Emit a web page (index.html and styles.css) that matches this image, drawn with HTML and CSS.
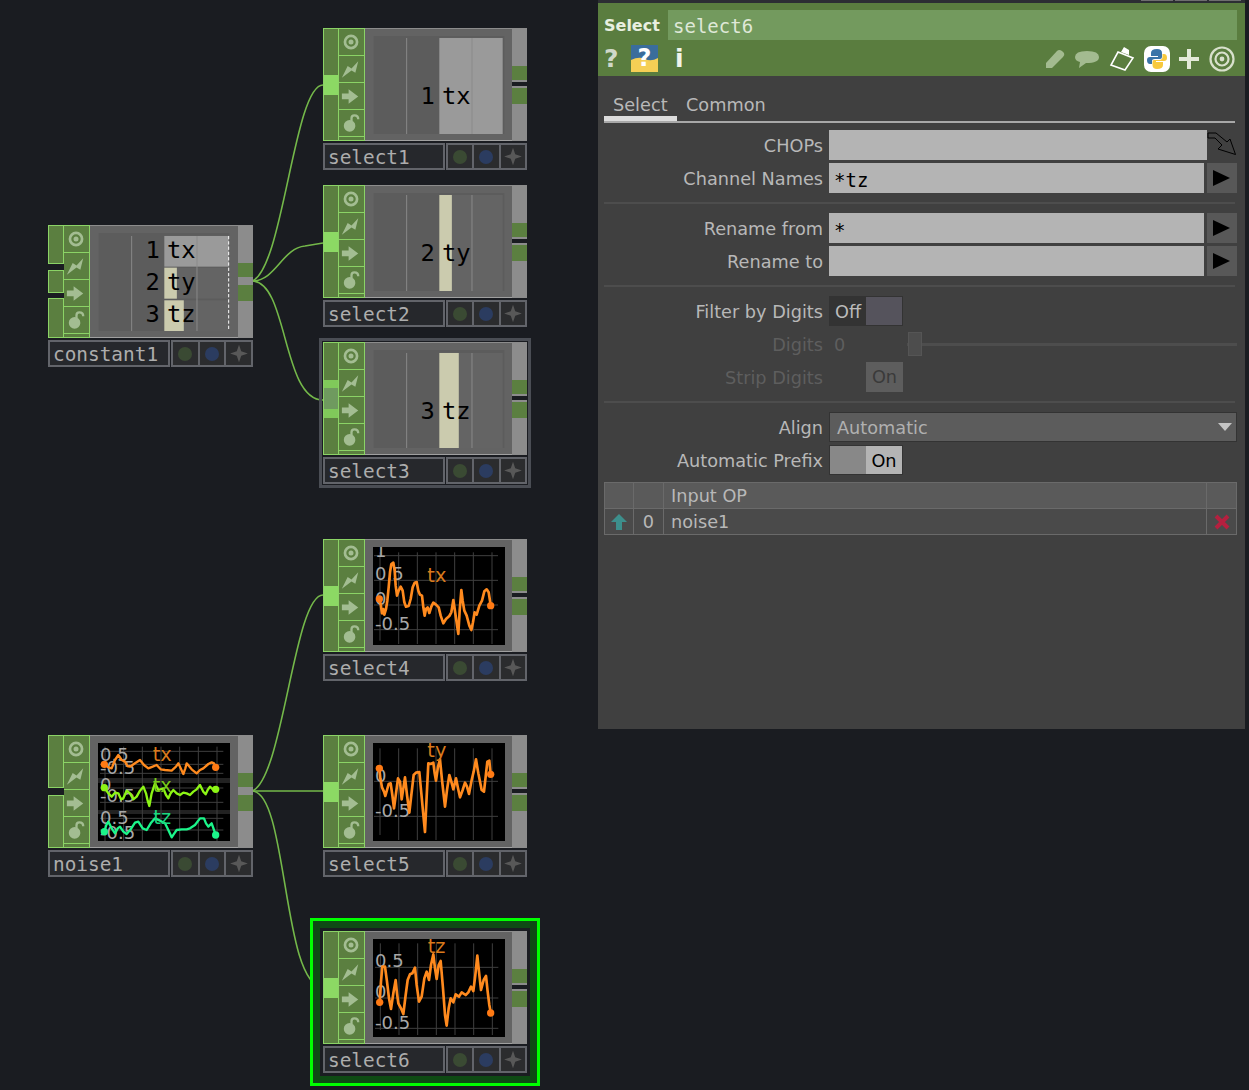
FILE: index.html

```html
<!DOCTYPE html>
<html lang="en">

<head>
    <meta charset="UTF-8">
    <title>select6</title>
    <link rel="stylesheet" href="styles.css">
</head>

<body>
    <svg class="defs" width="0" height="0">
        <symbol id="i-target" viewBox="0 0 26 26">
            <circle cx="12.5" cy="13" r="6.3" fill="none" stroke="#a3bd92" stroke-width="2.8" />
            <circle cx="12.5" cy="13" r="2.6" fill="#a3bd92" />
        </symbol>
        <symbol id="i-bolt" viewBox="0 0 26 26">
            <path d="M3 22 L9 10 L13 12.5 L20 5 L17 17 L13 14.5 Z" fill="#a3bd92" />
        </symbol>
        <symbol id="i-arrow" viewBox="0 0 26 26">
            <path d="M3 10.5 H10 V6 L20 13.5 L10 21 V16.5 H3 Z" fill="#a3bd92" />
        </symbol>
        <symbol id="i-lock" viewBox="0 0 26 26">
            <circle cx="11" cy="16" r="6" fill="#a3bd92" />
            <path d="M13 11 V8 Q13 5 16 5 Q20 5 20 9" fill="none" stroke="#a3bd92" stroke-width="2.4" />
        </symbol>
        <symbol id="i-star" viewBox="0 0 26 26">
            <path d="M13 3 L15.5 10.5 L23 13 L15.5 15.5 L13 23 L10.5 15.5 L3 13 L10.5 10.5 Z" fill="#585858" />
        </symbol>
    </svg>

    <!-- wires between the nodes -->
    <svg class="wires" width="1249" height="1090" viewBox="0 0 1249 1090">
        <path d="M252 281 C283 270 294 85 323 85" />
        <path d="M252 281 C276 281 282 248 305 246 L323 243" />
        <path d="M252 281 C288 281 282 400 323 400" />
        <path d="M252 791 C283 780 294 595 323 595" />
        <path d="M252 791 H323" />
        <path d="M252 791 C288 791 282 987 323 987" />
    </svg>

    <!-- constant1 -->
    <div class="node n-constant1">
        <div class="node-body">
            <div class="inputs">
                <div class="input in-a"></div>
                <div class="input in-b"></div>
                <div class="input in-c"></div>
            </div>
            <div class="btns">
                <div class="btn"><svg><use href="#i-target" /></svg></div>
                <div class="btn"><svg><use href="#i-bolt" /></svg></div>
                <div class="btn"><svg><use href="#i-arrow" /></svg></div>
                <div class="btn"><svg><use href="#i-lock" /></svg></div>
                <div class="btn-end"></div>
            </div>
            <div class="view">
                <svg class="screen" viewBox="174 48 396 297">
                    <rect x="174" y="48" width="396" height="297" fill="#5c5c5c" />
                    <rect x="373" y="57" width="195" height="93" fill="#9a9a9a" />
                    <rect x="373" y="153" width="195" height="94" fill="#646464" />
                    <rect x="373" y="252" width="195" height="93" fill="#646464" />
                    <rect x="373" y="153" width="38" height="94" fill="#cbcbae" />
                    <rect x="373" y="252" width="59" height="93" fill="#cbcbae" />
                    <path class="tick" d="M274 57 V345 M472 57 V345" />
                    <path class="dash" d="M568 57 V345" />
                    <text class="num" x="316" y="124">1</text>
                    <text class="num" x="381" y="124">tx</text>
                    <text class="num" x="316" y="221">2</text>
                    <text class="num" x="381" y="221">ty</text>
                    <text class="num" x="316" y="318">3</text>
                    <text class="num" x="381" y="318">tz</text>
                </svg>
            </div>
            <div class="outs">
                <div class="out"></div>
                <div class="out-gap plain"></div>
                <div class="out"></div>
            </div>
        </div>
        <div class="node-foot">
            <div class="node-name">constant1</div>
            <div class="flags">
                <div class="flag"><i class="dot dot-green"></i></div>
                <div class="flag"><i class="dot dot-blue"></i></div>
                <div class="flag"><svg><use href="#i-star" /></svg></div>
            </div>
        </div>
    </div>

    <!-- select1 -->
    <div class="node n-select1">
        <div class="node-body">
            <div class="inputs">
                <div class="input"><span class="wire-in"></span></div>
            </div>
            <div class="btns">
                <div class="btn"><svg><use href="#i-target" /></svg></div>
                <div class="btn"><svg><use href="#i-bolt" /></svg></div>
                <div class="btn"><svg><use href="#i-arrow" /></svg></div>
                <div class="btn"><svg><use href="#i-lock" /></svg></div>
                <div class="btn-end"></div>
            </div>
            <div class="view">
                <svg class="screen" viewBox="174 45 396 297">
                    <rect x="174" y="45" width="396" height="297" fill="#5c5c5c" />
                    <rect x="373" y="51" width="192" height="291" fill="#9a9a9a" />
                    <path class="tick" d="M274 51 V342 M472 51 V342" />
                    <text class="num" x="316" y="252">1</text>
                    <text class="num" x="381" y="252">tx</text>
                </svg>
            </div>
            <div class="outs">
                <div class="out"></div>
                <div class="out-gap"></div>
                <div class="out"></div>
            </div>
        </div>
        <div class="node-foot">
            <div class="node-name">select1</div>
            <div class="flags">
                <div class="flag"><i class="dot dot-green"></i></div>
                <div class="flag"><i class="dot dot-blue"></i></div>
                <div class="flag"><svg><use href="#i-star" /></svg></div>
            </div>
        </div>
    </div>

    <!-- select2 -->
    <div class="node n-select2">
        <div class="node-body">
            <div class="inputs">
                <div class="input"><span class="wire-in"></span></div>
            </div>
            <div class="btns">
                <div class="btn"><svg><use href="#i-target" /></svg></div>
                <div class="btn"><svg><use href="#i-bolt" /></svg></div>
                <div class="btn"><svg><use href="#i-arrow" /></svg></div>
                <div class="btn"><svg><use href="#i-lock" /></svg></div>
                <div class="btn-end"></div>
            </div>
            <div class="view">
                <svg class="screen" viewBox="174 45 396 297">
                    <rect x="174" y="45" width="396" height="297" fill="#5c5c5c" />
                    <rect x="373" y="51" width="192" height="291" fill="#646464" />
                    <rect x="373" y="51" width="38" height="291" fill="#cbcbae" />
                    <path class="tick" d="M274 51 V342 M472 51 V342" />
                    <text class="num" x="316" y="252">2</text>
                    <text class="num" x="381" y="252">ty</text>
                </svg>
            </div>
            <div class="outs">
                <div class="out"></div>
                <div class="out-gap"></div>
                <div class="out"></div>
            </div>
        </div>
        <div class="node-foot">
            <div class="node-name">select2</div>
            <div class="flags">
                <div class="flag"><i class="dot dot-green"></i></div>
                <div class="flag"><i class="dot dot-blue"></i></div>
                <div class="flag"><svg><use href="#i-star" /></svg></div>
            </div>
        </div>
    </div>

    <!-- select3 -->
    <div class="node n-select3">
        <div class="node-body">
            <div class="inputs">
                <div class="input"><span class="wire-in wire-soft"></span></div>
            </div>
            <div class="btns">
                <div class="btn"><svg><use href="#i-target" /></svg></div>
                <div class="btn"><svg><use href="#i-bolt" /></svg></div>
                <div class="btn"><svg><use href="#i-arrow" /></svg></div>
                <div class="btn"><svg><use href="#i-lock" /></svg></div>
                <div class="btn-end"></div>
            </div>
            <div class="view">
                <svg class="screen" viewBox="174 42 396 297">
                    <rect x="174" y="42" width="396" height="297" fill="#5c5c5c" />
                    <rect x="373" y="51" width="192" height="288" fill="#646464" />
                    <rect x="373" y="51" width="59" height="288" fill="#cbcbae" />
                    <path class="tick" d="M274 51 V339 M472 51 V339" />
                    <text class="num" x="316" y="250">3</text>
                    <text class="num" x="381" y="250">tz</text>
                </svg>
            </div>
            <div class="outs">
                <div class="out"></div>
                <div class="out-gap"></div>
                <div class="out"></div>
            </div>
        </div>
        <div class="node-foot">
            <div class="node-name">select3</div>
            <div class="flags">
                <div class="flag"><i class="dot dot-green"></i></div>
                <div class="flag"><i class="dot dot-blue"></i></div>
                <div class="flag"><svg><use href="#i-star" /></svg></div>
            </div>
        </div>
    </div>

    <!-- select4 -->
    <div class="node n-select4">
        <div class="node-body">
            <div class="inputs">
                <div class="input"><span class="wire-in"></span></div>
            </div>
            <div class="btns">
                <div class="btn"><svg><use href="#i-target" /></svg></div>
                <div class="btn"><svg><use href="#i-bolt" /></svg></div>
                <div class="btn"><svg><use href="#i-arrow" /></svg></div>
                <div class="btn"><svg><use href="#i-lock" /></svg></div>
                <div class="btn-end"></div>
            </div>
            <div class="view">
                <svg class="screen" viewBox="9 9 396 294">
                    <rect x="9" y="9" width="396" height="294" fill="#000" />
                    <path class="grid" d="M30 25 V290 M86 25 V300 M142 25 V300 M198 25 V300 M254 25 V300 M310 25 V300 M366 25 V300 M12 35 H384 M12 109 H384 M12 183 H384 M12 257 H384" />
                    <text class="val" x="15" y="38">1</text>
                    <text class="val" x="15" y="108">0.5</text>
                    <text class="val" x="15" y="182">0</text>
                    <text class="val" x="15" y="258">-0.5</text>
                    <polyline class="trace" points="28,165 32,180 36,208 40,195 43,212 48,195 52,170 56,130 60,85 64,60 70,56 74,80 77,125 81,155 86,140 92,128 98,140 103,175 108,188 116,186 122,165 128,130 134,116 140,114 145,140 150,152 156,155 160,190 164,215 168,195 173,190 178,207 184,188 190,176 198,182 206,190 212,215 220,238 228,225 238,216 244,205 250,168 254,195 258,222 262,250 265,270 269,200 274,138 278,170 283,200 290,215 298,245 304,258 309,235 314,205 320,212 328,185 336,170 343,142 350,136 356,145 360,170 362,185" />
                    <circle class="end" cx="28" cy="165" r="11" />
                    <circle class="end" cx="362" cy="185" r="11" />
                    <text class="chan" x="172" y="114">tx</text>
                </svg>
            </div>
            <div class="outs">
                <div class="out"></div>
                <div class="out-gap"></div>
                <div class="out"></div>
            </div>
        </div>
        <div class="node-foot">
            <div class="node-name">select4</div>
            <div class="flags">
                <div class="flag"><i class="dot dot-green"></i></div>
                <div class="flag"><i class="dot dot-blue"></i></div>
                <div class="flag"><svg><use href="#i-star" /></svg></div>
            </div>
        </div>
    </div>

    <!-- noise1 -->
    <div class="node n-noise1">
        <div class="node-body">
            <div class="inputs">
                <div class="input in-half"></div>
                <div class="input in-half"></div>
            </div>
            <div class="btns">
                <div class="btn"><svg><use href="#i-target" /></svg></div>
                <div class="btn"><svg><use href="#i-bolt" /></svg></div>
                <div class="btn"><svg><use href="#i-arrow" /></svg></div>
                <div class="btn"><svg><use href="#i-lock" /></svg></div>
                <div class="btn-end"></div>
            </div>
            <div class="view">
                <svg class="screen" viewBox="174 39 396 294">
                    <rect x="174" y="39" width="396" height="294" fill="#000" />
                    <rect x="174" y="144" width="396" height="15" fill="#222" />
                    <rect x="174" y="240" width="396" height="12" fill="#222" />
                    <path class="grid" d="M195 50 V333 M251 50 V333 M307 50 V333 M363 50 V333 M419 50 V333 M475 50 V333 M531 50 V333 M180 64 H550 M180 103 H550 M180 130 H550 M180 174 H550 M180 217 H550 M180 265 H550 M180 300 H550" />
                    <text class="val" x="180" y="92">0.5</text>
                    <text class="val" x="180" y="132">-0.5</text>
                    <text class="val" x="180" y="182">0</text>
                    <text class="val" x="180" y="215">-0.5</text>
                    <text class="val" x="180" y="282">0.5</text>
                    <text class="val" x="180" y="326">-0.5</text>
                    <polyline class="trace thin" points="193,103 205,112 215,115 225,90 235,75 245,90 255,95 262,108 270,110 285,100 300,90 312,105 325,115 338,110 350,105 362,118 375,120 395,122 408,110 415,100 422,115 430,132 436,115 440,100 455,118 470,130 480,120 490,115 505,102 515,97 522,100 527,112" />
                    <polyline class="trace thin lime" points="193,173 205,190 215,200 225,188 235,190 243,208 250,205 260,182 270,190 280,208 290,200 300,182 310,170 318,190 323,212 328,228 335,190 345,160 355,180 370,175 378,195 385,205 392,190 400,180 410,190 420,195 430,188 440,190 450,195 460,185 470,178 480,165 490,185 497,193 503,180 510,170 520,180 527,178" />
                    <polyline class="trace thin mint" points="193,305 199,285 205,275 215,295 225,310 233,295 240,290 250,305 260,312 272,298 285,278 295,275 308,295 320,300 332,280 345,265 360,272 375,280 385,300 395,322 403,310 410,300 425,298 440,298 450,295 465,285 480,265 492,265 498,280 505,290 515,280 522,300 527,315" />
                    <circle class="end" cx="193" cy="103" r="11" />
                    <circle class="end" cx="527" cy="112" r="11" />
                    <circle class="end lime" cx="193" cy="173" r="11" />
                    <circle class="end lime" cx="527" cy="178" r="11" />
                    <circle class="end mint" cx="193" cy="305" r="11" />
                    <circle class="end mint" cx="527" cy="315" r="11" />
                    <text class="chan" x="338" y="94">tx</text>
                    <text class="chan lime" x="338" y="186">tx</text>
                    <text class="chan mint" x="340" y="282">tz</text>
                </svg>
            </div>
            <div class="outs">
                <div class="out"></div>
                <div class="out-gap plain"></div>
                <div class="out"></div>
            </div>
        </div>
        <div class="node-foot">
            <div class="node-name">noise1</div>
            <div class="flags">
                <div class="flag"><i class="dot dot-green"></i></div>
                <div class="flag"><i class="dot dot-blue"></i></div>
                <div class="flag"><svg><use href="#i-star" /></svg></div>
            </div>
        </div>
    </div>

    <!-- select5 -->
    <div class="node n-select5">
        <div class="node-body">
            <div class="inputs">
                <div class="input"><span class="wire-in"></span></div>
            </div>
            <div class="btns">
                <div class="btn"><svg><use href="#i-target" /></svg></div>
                <div class="btn"><svg><use href="#i-bolt" /></svg></div>
                <div class="btn"><svg><use href="#i-arrow" /></svg></div>
                <div class="btn"><svg><use href="#i-lock" /></svg></div>
                <div class="btn-end"></div>
            </div>
            <div class="view">
                <svg class="screen" viewBox="9 9 396 294">
                    <rect x="9" y="9" width="396" height="294" fill="#000" />
                    <path class="grid" d="M30 25 V285 M86 25 V300 M142 25 V300 M198 25 V300 M254 25 V300 M310 25 V300 M366 25 V300 M12 124 H384 M12 229 H384" />
                    <text class="val" x="15" y="125">0</text>
                    <text class="val" x="15" y="230">-0.5</text>
                    <polyline class="trace" points="28,85 31,115 36,142 42,155 46,168 51,150 56,132 62,130 67,165 72,205 78,160 84,115 90,125 95,178 100,145 105,112 111,165 118,218 124,165 131,105 138,98 148,96 154,160 160,225 165,276 170,170 175,70 182,72 190,68 194,100 198,122 204,80 210,58 216,120 225,200 231,150 238,105 244,125 250,148 258,115 264,145 270,172 278,150 285,128 291,140 297,162 305,120 311,95 318,58 325,100 335,150 342,155 347,110 352,65 358,62 362,103" />
                    <circle class="end" cx="28" cy="85" r="11" />
                    <circle class="end" cx="362" cy="103" r="11" />
                    <text class="chan" x="172" y="52">ty</text>
                </svg>
            </div>
            <div class="outs">
                <div class="out"></div>
                <div class="out-gap"></div>
                <div class="out"></div>
            </div>
        </div>
        <div class="node-foot">
            <div class="node-name">select5</div>
            <div class="flags">
                <div class="flag"><i class="dot dot-green"></i></div>
                <div class="flag"><i class="dot dot-blue"></i></div>
                <div class="flag"><svg><use href="#i-star" /></svg></div>
            </div>
        </div>
    </div>

    <!-- select6 -->
    <div class="node n-select6">
        <div class="node-body">
            <div class="inputs">
                <div class="input"><span class="wire-in"></span></div>
            </div>
            <div class="btns">
                <div class="btn"><svg><use href="#i-target" /></svg></div>
                <div class="btn"><svg><use href="#i-bolt" /></svg></div>
                <div class="btn"><svg><use href="#i-arrow" /></svg></div>
                <div class="btn"><svg><use href="#i-lock" /></svg></div>
                <div class="btn-end"></div>
            </div>
            <div class="view">
                <svg class="screen" viewBox="204 72 396 294">
                    <rect x="204" y="72" width="396" height="294" fill="#000" />
                    <path class="grid" d="M226 85 V345 M282 85 V360 M338 85 V360 M394 85 V360 M450 85 V360 M506 85 V360 M562 85 V360 M210 157 H580 M210 249 H580 M210 340 H580" />
                    <text class="val" x="210" y="156">0.5</text>
                    <text class="val" x="210" y="250">0</text>
                    <text class="val" x="210" y="342">-0.5</text>
                    <polyline class="trace" points="224,262 228,200 232,155 240,155 246,200 252,250 258,282 265,235 272,195 276,235 280,265 288,280 295,297 302,240 308,195 315,178 322,175 330,158 335,210 342,260 350,245 358,190 365,170 372,195 378,150 385,118 390,160 395,192 401,150 407,138 414,220 420,300 425,332 431,280 437,250 445,262 452,238 462,245 470,232 482,240 490,232 498,215 505,228 511,180 517,122 522,170 528,225 536,195 543,183 548,230 553,270 557,292" />
                    <circle class="end" cx="224" cy="262" r="11" />
                    <circle class="end" cx="557" cy="294" r="11" />
                    <text class="chan" x="368" y="114">tz</text>
                </svg>
            </div>
            <div class="outs">
                <div class="out"></div>
                <div class="out-gap"></div>
                <div class="out"></div>
            </div>
        </div>
        <div class="node-foot">
            <div class="node-name">select6</div>
            <div class="flags">
                <div class="flag"><i class="dot dot-green"></i></div>
                <div class="flag"><i class="dot dot-blue"></i></div>
                <div class="flag"><svg><use href="#i-star" /></svg></div>
            </div>
        </div>
    </div>

    <!-- parameter window -->
    <div class="panel">
        <div class="panel-top">
            <span></span><span></span><span></span>
        </div>
        <div class="head">
            <div class="head-name">
                <b class="op-type">Select</b>
                <div class="op-name">select6</div>
            </div>
            <div class="head-tools">
                <div class="tools-left">
                    <b class="tool-q">?</b>
                    <svg class="tool-py" width="27" height="27" viewBox="0 0 27 27">
                        <rect width="27" height="27" fill="#3a6d9c" />
                        <path d="M0 15 Q8 11 14 14 T27 13 V27 H0 Z" fill="#f5cf55" />
                        <text x="13.5" y="21" text-anchor="middle">?</text>
                    </svg>
                    <b class="tool-i">i</b>
                </div>
                <div class="tools-right">
                    <svg width="20" height="20" viewBox="0 0 20 20">
                        <path d="M1 14 L12 2 Q14 0 17 2 L19 4 Q20 6 18 8 L7 19 H1 Z" fill="#a3bb90" />
                    </svg>
                    <svg width="26" height="20" viewBox="0 0 26 20">
                        <path d="M1 8 Q1 2 13 2 Q25 2 25 8 Q25 14 12 14 L5 19 L6 13 Q1 12 1 8 Z" fill="#a3bb90" />
                    </svg>
                    <svg width="26" height="26" viewBox="0 0 26 26">
                        <path d="M9 6 L24 12 L16 24 L2 19 Z" fill="none" stroke="#fff" stroke-width="1.6" />
                        <path d="M12 6 L15 1 L20 4 L20 9 Z" fill="#fff" />
                    </svg>
                    <svg width="26" height="26" viewBox="0 0 26 26">
                        <rect width="26" height="26" rx="7" fill="#fff" />
                        <path d="M13 3 Q7 3 7 7 V10 H14 V11 H6 Q3 11 3 14 Q3 18 6 18 H8 V15 Q8 13 11 13 H16 Q18 13 18 11 V7 Q18 3 13 3 Z" fill="#3a74a8" />
                        <path d="M13 23 Q19 23 19 19 V16 H12 V15 H20 Q23 15 23 12 Q23 8 20 8 H18.5 V11 Q18.5 14 15 14 H10 Q8.5 14 8.5 16 V19 Q8.5 23 13 23 Z" fill="#f7c93e" />
                    </svg>
                    <svg class="tool-plus" width="20" height="20" viewBox="0 0 20 20">
                        <path d="M8 0 H12 V8 H20 V12 H12 V20 H8 V12 H0 V8 H8 Z" fill="#e4ead9" />
                    </svg>
                    <svg width="26" height="26" viewBox="0 0 26 26">
                        <circle cx="13" cy="13" r="11.5" fill="none" stroke="#d8e0cc" stroke-width="2.2" />
                        <circle cx="13" cy="13" r="6.5" fill="none" stroke="#d8e0cc" stroke-width="2.2" />
                        <circle cx="13" cy="13" r="2.4" fill="#d8e0cc" />
                    </svg>
                </div>
            </div>
        </div>

        <div class="tabs">
            <span class="tab active">Select</span>
            <span class="tab">Common</span>
        </div>

        <div class="params">
            <div class="row">
                <label>CHOPs</label>
                <div class="field field-long"></div>
                <svg class="drop-arrow" width="30" height="30" viewBox="0 0 30 30">
                    <path d="M1 3 H9 L20 12 L23 9 L28.5 24.5 L11 19 L15 15 L8 8 H1 Z" fill="none" stroke="#000" />
                </svg>
            </div>
            <div class="row">
                <label>Channel Names</label>
                <div class="field">*tz</div>
                <div class="play"></div>
            </div>
            <div class="sep"></div>
            <div class="row">
                <label>Rename from</label>
                <div class="field">*</div>
                <div class="play"></div>
            </div>
            <div class="row">
                <label>Rename to</label>
                <div class="field"></div>
                <div class="play"></div>
            </div>
            <div class="sep"></div>
            <div class="row">
                <label>Filter by Digits</label>
                <div class="toggle toggle-off"><span>Off</span><span></span></div>
            </div>
            <div class="row off">
                <label>Digits</label>
                <div class="digits-val">0</div>
                <div class="slider"><span class="slider-knob"></span></div>
            </div>
            <div class="row off">
                <label>Strip Digits</label>
                <div class="toggle toggle-dim"><span></span><span>On</span></div>
            </div>
            <div class="sep"></div>
            <div class="row">
                <label>Align</label>
                <div class="menu">Automatic<i class="menu-caret"></i></div>
            </div>
            <div class="row">
                <label>Automatic Prefix</label>
                <div class="toggle toggle-on"><span></span><span>On</span></div>
            </div>
            <div class="table">
                <div class="cell head-cell"></div>
                <div class="cell head-cell"></div>
                <div class="cell head-cell cell-text">Input OP</div>
                <div class="cell head-cell"></div>
                <div class="cell cell-icon">
                    <svg width="18" height="18" viewBox="0 0 18 18">
                        <path d="M9 1 L17 9 H12 V17 H6 V9 H1 Z" fill="#3d8f8c" />
                    </svg>
                </div>
                <div class="cell cell-num">0</div>
                <div class="cell cell-text">noise1</div>
                <div class="cell cell-icon">
                    <svg width="18" height="18" viewBox="0 0 18 18">
                        <path d="M3 3 L15 15 M15 3 L3 15" stroke="#b5203f" stroke-width="4" />
                    </svg>
                </div>
            </div>
        </div>
    </div>
</body>

</html>
```

FILE: styles.css

```css
* {
    margin: 0;
    padding: 0;
    box-sizing: border-box;
}

html,
body {
    height: 100%;
}

body {
    position: relative;
    width: 1249px;
    height: 1090px;
    overflow: hidden;
    background: #1a1c21;
    font-family: "DejaVu Sans", sans-serif;
}

.defs {
    position: absolute;
}

.wires {
    position: absolute;
    left: 0;
    top: 0;
}

.wires path {
    fill: none;
    stroke: #74b84a;
    stroke-width: 1.6;
}

/* network nodes, their place on the canvas is the content */
.node {
    position: absolute;
    width: 204px;
    display: flex;
    flex-direction: column;
    gap: 2px;
}

.n-constant1 { left: 48px; top: 225px; width: 205px; }
.n-noise1 { left: 48px; top: 735px; width: 205px; }
.n-select1 { left: 323px; top: 28px; }
.n-select2 { left: 323px; top: 185px; }
.n-select3 { left: 323px; top: 342px; outline: 3px solid #4a4d54; outline-offset: 1px; }
.n-select4 { left: 323px; top: 539px; }
.n-select5 { left: 323px; top: 735px; }
.n-select6 {
    left: 323px;
    top: 931px;
    box-shadow: 0 0 0 3px #1a1c21, 0 0 0 10px #0e4a14, 0 0 0 13px #00ff00;
}

.node-body {
    display: flex;
    height: 113px;
}

.inputs {
    width: 16px;
    display: flex;
    flex-direction: column;
    justify-content: space-between;
}

.input {
    flex: 1;
    display: flex;
    flex-direction: column;
    justify-content: center;
    background: #5b7f40;
    border: 1.5px solid #8bd366;
    border-right-width: 1px;
}

.in-a { flex: none; height: 39px; }
.in-b { flex: none; height: 23px; }
.in-c { flex: none; height: 40px; }
.in-half { flex: none; height: 53px; }

.wire-in {
    height: 20px;
    background: #8cd964;
}

.wire-soft {
    height: 38px;
    background: #6f9a5f;
    border-top: 8px solid #80c95a;
    border-bottom: 9px solid #80c95a;
}

.btns {
    width: 26px;
    display: flex;
    flex-direction: column;
    gap: 1px;
    background: #8bd366;
    border: solid #8bd366;
    border-width: 1px 1px 1px 0;
}

.btn {
    height: 26px;
    background: #5b7f40;
}

.btn svg {
    display: block;
    width: 25px;
    height: 26px;
}

.btn-end {
    flex: 1;
    background: #5b7f40;
}

.view {
    flex: 1;
    padding: 7px 7px 7px 8px;
    background: #636363;
    border-top: 1px solid #8c8c8c;
    border-bottom: 1px solid #a0a0a0;
}

.screen {
    display: block;
    width: 132px;
    height: 98px;
}

.tick {
    stroke: #8a8a8a;
    stroke-width: 3;
    fill: none;
}

.dash {
    stroke: #fff;
    stroke-width: 3;
    stroke-dasharray: 10 6;
    fill: none;
}

.num {
    font-family: "DejaVu Sans Mono", monospace;
    font-size: 72px;
    fill: #000;
}

.grid {
    stroke: #3f3f3f;
    stroke-width: 3;
    fill: none;
}

.val {
    font-size: 54px;
    fill: #a8a8a8;
}

.chan {
    font-size: 58px;
    fill: #d97a1c;
}

.trace {
    fill: none;
    stroke: #ff8a1e;
    stroke-width: 8;
    stroke-linejoin: round;
}

.trace.thin {
    stroke-width: 7;
}

.trace.lime { stroke: #8cf515; }
.trace.mint { stroke: #1bf58a; }

.end { fill: #ff7a14; }
.end.lime { fill: #8cf515; }
.end.mint { fill: #1bf58a; }
.chan.lime { fill: #78c81a; }
.chan.mint { fill: #1bd880; }

.outs {
    width: 15px;
    padding-top: 38px;
    display: flex;
    flex-direction: column;
    background: #8c8c8c;
}

.out {
    height: 14px;
    background: #5b7f40;
}

.out-gap + .out {
    height: 16px;
}

.out-gap {
    height: 8px;
    border: solid #8c8c8c;
    border-width: 2px 0;
    background: #1a1c21;
}

.out-gap.plain {
    background: #8c8c8c;
}

.node-foot {
    display: flex;
    height: 27px;
    gap: 1px;
}

.node-name {
    width: 122px;
    height: 27px;
    padding-left: 3px;
    background: #26282c;
    border: 2px solid #62646a;
    color: #adadad;
    font: 19.4px/25px "DejaVu Sans Mono", monospace;
}

.flags {
    flex: 1;
    display: flex;
    background: #62646a;
    padding: 2px;
    gap: 2px;
}

.flag {
    flex: 1;
    display: flex;
    align-items: center;
    justify-content: center;
    background: #2b2c2e;
}

.flag svg {
    width: 24px;
    height: 23px;
}

.dot {
    width: 14px;
    height: 14px;
    border-radius: 50%;
}

.dot-green { background: #3a4a33; }
.dot-blue { background: #2b3c60; }

/* parameter window */
.panel {
    position: absolute;
    left: 598px;
    top: 0;
    width: 647px;
    height: 729px;
    background: #404040;
    color: #b8b8b8;
    font-size: 17.7px;
}

.panel-top {
    height: 3px;
    padding-right: 4px;
    display: flex;
    justify-content: flex-end;
    align-items: flex-start;
    gap: 2px;
    background: #2c2e33;
}

.panel-top span {
    width: 32px;
    height: 1px;
    background: #6e6e6e;
}

.head {
    height: 73px;
    padding: 7px 8px 0 6px;
    background: #5a7d3f;
}

.head-name {
    display: flex;
    align-items: center;
    height: 30px;
}

.op-type {
    width: 64px;
    color: #e8efe0;
    font-size: 16px;
}

.op-name {
    flex: 1;
    height: 30px;
    padding-left: 5px;
    background: #739a5e;
    color: #dfe8d8;
    font: 19px/33px "DejaVu Sans Mono", monospace;
}

.head-tools {
    display: flex;
    justify-content: space-between;
    align-items: center;
    height: 27px;
    margin-top: 5px;
}

.tools-left,
.tools-right {
    display: flex;
    align-items: center;
}

.tools-left {
    gap: 12px;
}

.tools-right {
    gap: 9px;
    padding-right: 2px;
}

.tool-plus {
    margin-right: 1px;
}

.tool-q {
    width: 15px;
    color: #d0d8c8;
    font-size: 25px;
    line-height: 27px;
}

.tool-py text {
    font-size: 24px;
    font-weight: bold;
    fill: #fff;
}

.tool-i {
    margin-left: 5px;
    color: #f0f4ea;
    font-size: 25px;
    line-height: 27px;
}

.tabs {
    display: flex;
    height: 47px;
    margin: 0 10px 0 6px;
    padding-top: 16px;
    border-bottom: 2px solid #a8a8a8;
}

.tab {
    padding: 0 9px;
    line-height: 26px;
    height: 29px;
}

.tab.active {
    border-bottom: 5px solid #dcdcdc;
    width: 73px;
    color: #b8b8b8;
}

.params {
    padding-top: 7px;
}

.row {
    display: flex;
    height: 30px;
    margin-bottom: 3px;
    line-height: 32px;
}

.row label {
    width: 225px;
    margin-right: 6px;
    text-align: right;
}

.row.off label {
    color: #5e5e5e;
}

.field {
    width: 375px;
    padding-left: 5px;
    background: #b4b4b4;
    color: #000;
    font: 19px/34px "DejaVu Sans Mono", monospace;
}

.field-long {
    width: 378px;
}

.play {
    position: relative;
    width: 30px;
    margin-left: 3px;
    background: #585858;
}

.play::after {
    content: "";
    position: absolute;
    left: 6px;
    top: 7px;
    border-left: 17px solid #000;
    border-top: 8px solid transparent;
    border-bottom: 8px solid transparent;
}

.sep {
    height: 2px;
    margin: 9px 10px 9px 6px;
    background: #4d4d4d;
}

.toggle {
    display: flex;
    width: 74px;
    height: 30px;
    border: 1px solid #333;
    line-height: 30px;
}

.toggle span {
    width: 37px;
    text-align: center;
}

.toggle-off span:first-child {
    background: #333;
    color: #bbb;
    text-align: left;
    padding-left: 5px;
}

.toggle-off span:last-child {
    background: #55535c;
}

.toggle-dim {
    border: 0;
}

.toggle-dim span:last-child {
    background: #5d5d5d;
    color: #3a3a3a;
}

.toggle-on span:first-child {
    background: #888;
}

.toggle-on span:last-child {
    background: #b4b4b4;
    color: #000;
}

.digits-val {
    width: 78px;
    padding-left: 5px;
    color: #5e5e5e;
}

.slider {
    position: relative;
    width: 330px;
    height: 30px;
    background: linear-gradient(#4d4d4d, #4d4d4d) center / 100% 3px no-repeat;
}

.slider-knob {
    position: absolute;
    left: 1px;
    top: 3px;
    width: 14px;
    height: 24px;
    background: #4d4d4d;
    border: 1px solid #555;
}

.menu {
    position: relative;
    width: 408px;
    height: 30px;
    padding-left: 7px;
    background: #5c5c5c;
    border: 1px solid #333;
    line-height: 30px;
    color: #b0b0b0;
}

.menu-caret {
    position: absolute;
    right: 4px;
    top: 10px;
    border-top: 8px solid #c4c4c4;
    border-left: 7px solid transparent;
    border-right: 7px solid transparent;
}

.table {
    display: grid;
    grid-template-columns: 28px 29px 542px 29px;
    grid-template-rows: 25px 25px;
    margin: 7px 0 0 6px;
    width: 633px;
    background: #6a6a6a;
    border: 1px solid #6a6a6a;
    gap: 1px;
}

.cell {
    background: #4a4a4a;
    line-height: 27px;
}

.head-cell {
    background: #5a5a5a;
}

.cell-text {
    padding-left: 7px;
}

.cell-num {
    text-align: center;
}

.cell-icon {
    display: flex;
    align-items: center;
    justify-content: center;
}
```
